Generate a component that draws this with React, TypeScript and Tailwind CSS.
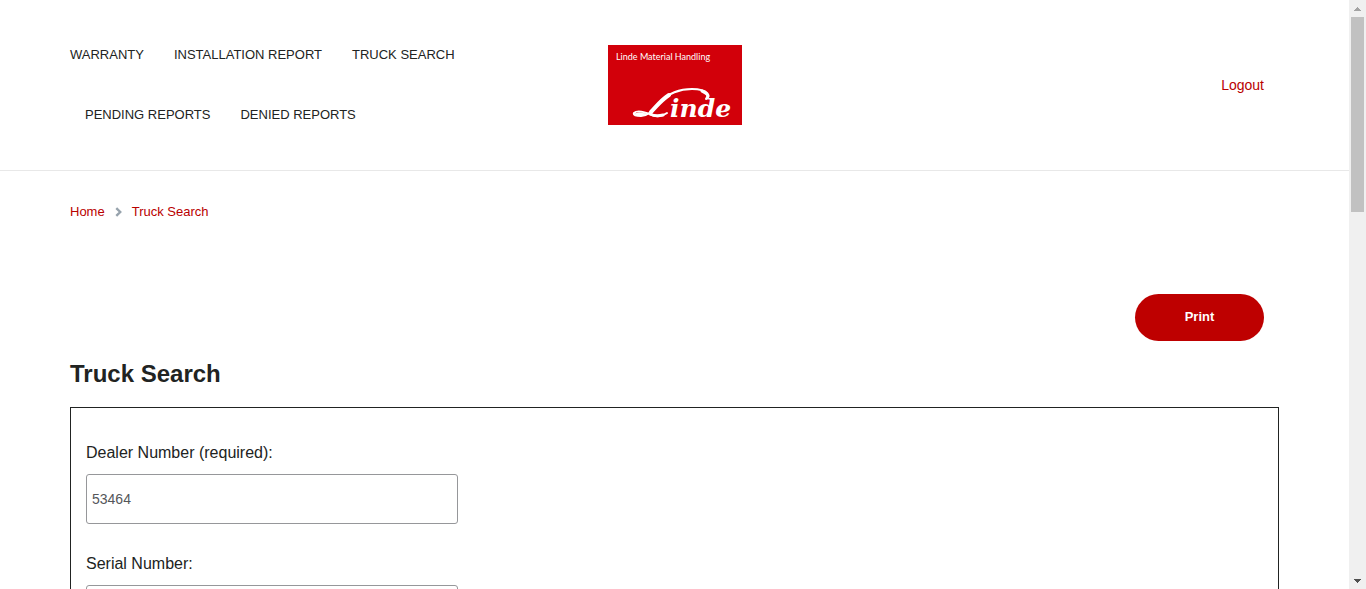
import React from "react";

const navItems = [
  "Warranty",
  "Installation Report",
  "Truck Search",
  "Pending Reports",
  "Denied Reports",
];

function Logo() {
  return (
    <svg width="134" height="80" viewBox="0 0 134 80" role="img" aria-label="Linde Material Handling">
      <rect width="134" height="80" fill="#d2000a" />
      <text x="8" y="15" fontSize="9" fill="#fff" fontFamily="Lato, 'Open Sans', sans-serif">
        Linde Material Handling
      </text>
      <g fill="none" stroke="#fff" strokeLinecap="round">
        <path
          d="M98 54 C103 52 101 44 84 44 C71 44 60 49 54 55 C48 61 44 70 33 71 C28 71 25 70 26 68 C29 65 37 67 44 70 C49 72 55 71 59 68"
          strokeWidth="2"
        />
        <path d="M94 46 C99 48 101 51 99 53" strokeWidth="3" />
        <path d="M61 50 C52 56 48 62 43 67" strokeWidth="4" />
        <path d="M27 69 C30 67 35 68 38 69 C35 71 29 71 27 69 Z" fill="#fff" strokeWidth="1" />
        <path d="M42 69 C46 71 51 71 55 70" strokeWidth="3" />
      </g>
      <text
        x="62"
        y="72"
        fontSize="25"
        fontWeight="700"
        fontStyle="italic"
        fill="#fff"
        fontFamily="'DejaVu Serif', 'Liberation Serif', serif"
      >
        inde
      </text>
    </svg>
  );
}

function Header() {
  return (
    <header className="border-b border-[#e8e8e8] px-[70px]">
      <div className="grid h-[170px] grid-cols-3 items-center">
        <nav aria-label="Main">
          <ul className="flex flex-wrap text-[13px] leading-[60px] text-[#212322] uppercase">
            {navItems.map((item) => (
              <li key={item} className="px-[15px] first:pl-0">
                <a href="#">{item}</a>
              </li>
            ))}
          </ul>
        </nav>
        <a href="#" className="justify-self-center">
          <Logo />
        </a>
        <a href="#" className="justify-self-end pr-[15px] text-sm text-[#b90000]">
          Logout
        </a>
      </div>
    </header>
  );
}

function Breadcrumb() {
  return (
    <nav aria-label="Breadcrumb" className="flex h-5 items-center gap-[10px] text-[13px] text-[#b90000]">
      <a href="#">Home</a>
      <svg width="7" height="10" viewBox="0 0 7 10" fill="none" stroke="#97a3ad" strokeWidth="2.4" aria-hidden="true">
        <path d="M1.3 1.2 L5.2 5 L1.3 8.8" />
      </svg>
      <a href="#">Truck Search</a>
    </nav>
  );
}

function Field({ id, label, value }: { id: string; label: string; value?: string }) {
  return (
    <div className="mb-7">
      <label htmlFor={id} className="mb-[9px] block text-base leading-6">
        {label}
      </label>
      <input
        id={id}
        type="text"
        defaultValue={value}
        className="block h-[50px] w-[372px] max-w-full rounded-[3px] border border-[#96979a] px-[5px] text-sm text-[#55565a]"
      />
    </div>
  );
}

function Scrollbar() {
  return (
    <div aria-hidden="true" className="flex w-[17px] shrink-0 flex-col items-center bg-[#f0f0f0]">
      <div className="flex h-[17px] items-center">
        <svg width="7" height="4" viewBox="0 0 7 4" fill="#a3a3a3" shapeRendering="crispEdges">
          <path d="M3 0h1v1h1v1h1v1h1v1H0V3h1V2h1V1h1z" />
        </svg>
      </div>
      <div className="h-[195px] w-[13px] bg-[#c1c1c1]" />
      <div className="mt-auto flex h-[17px] items-center">
        <svg width="7" height="4" viewBox="0 0 7 4" fill="#505050" shapeRendering="crispEdges">
          <path d="M0 0h7v1H6v1H5v1H4v1H3V3H2V2H1V1H0z" />
        </svg>
      </div>
    </div>
  );
}

export default function App() {
  return (
    <div className="flex h-screen overflow-hidden bg-white font-['Liberation_Sans',Arial,sans-serif] text-[#212322]">
      <div className="min-w-0 flex-1 overflow-hidden">
        <Header />
        <main className="px-[70px] pt-[31px]">
          <Breadcrumb />
          <div className="mt-[72px] flex justify-end pr-[15px]">
            <button
              type="button"
              className="h-[47px] w-[129px] rounded-3xl bg-[#be0000] pb-[2px] text-[13px] font-bold text-white"
            >
              Print
            </button>
          </div>
          <h1 className="mt-[17px] text-2xl leading-8 font-bold">Truck Search</h1>
          <form className="mt-[17px] border border-[#212322] px-[15px] pt-[33px]">
            <Field id="dealer" label="Dealer Number (required):" value="53464" />
            <Field id="serial" label="Serial Number:" />
          </form>
        </main>
      </div>
      <Scrollbar />
    </div>
  );
}
